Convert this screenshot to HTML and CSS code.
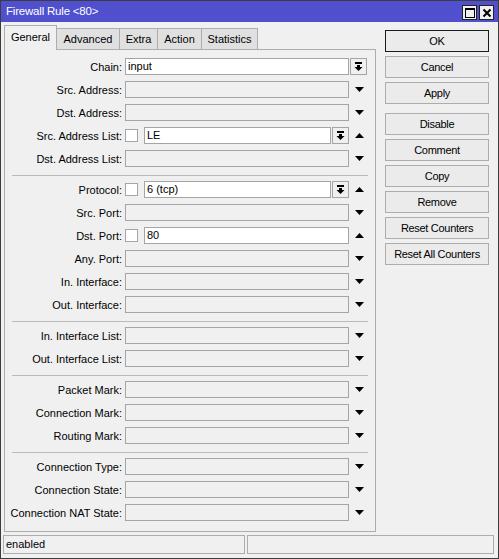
FILE: index.html
```html
<!DOCTYPE html>
<html>
<head>
<meta charset="utf-8">
<link rel="stylesheet" href="styles.css">
</head>
<body>
<div class="window">
  <div class="titlebar">
    <span class="title">Firewall Rule &lt;80&gt;</span>
    <div class="tb-btns">
      <span class="tb-btn"><svg width="12" height="12" viewBox="0 0 12 12"><rect x="1.5" y="1.5" width="9" height="9" fill="none" stroke="#000" stroke-width="1"/><rect x="1" y="1" width="10" height="2" fill="#000"/></svg></span>
      <span class="tb-btn"><svg width="12" height="12" viewBox="0 0 12 12"><path d="M2.5 2.5 L9.5 9.5 M9.5 2.5 L2.5 9.5" stroke="#000" stroke-width="2"/></svg></span>
    </div>
  </div>
  <div class="main">
    <div class="left">
      <div class="tabs">
        <div class="tab active w-general">General</div>
        <div class="tab w-advanced">Advanced</div>
        <div class="tab w-extra">Extra</div>
        <div class="tab w-action">Action</div>
        <div class="tab w-statistics">Statistics</div>
      </div>
      <div class="panel">
        <div class="row"><div class="lbl">Chain:</div><div class="field"><div class="box filled">input</div></div><div class="arrow"><div class="combo chain-combo"><svg width="9" height="10" viewBox="0 0 9 10"><rect x="1" y="0" width="7" height="2" fill="#000"/><rect x="3" y="3" width="3" height="2" fill="#000"/><polygon points="0.5,5 8.5,5 4.5,9" fill="#000"/></svg></div></div></div>
        <div class="row"><div class="lbl">Src. Address:</div><div class="field"><div class="box"></div></div><div class="arrow"><svg class="tri" width="9" height="5" viewBox="0 0 9 5"><polygon points="0,0 9,0 4.5,5" fill="#000"/></svg></div></div>
        <div class="row"><div class="lbl">Dst. Address:</div><div class="field"><div class="box"></div></div><div class="arrow"><svg class="tri" width="9" height="5" viewBox="0 0 9 5"><polygon points="0,0 9,0 4.5,5" fill="#000"/></svg></div></div>
        <div class="row"><div class="lbl">Src. Address List:</div><div class="field"><div class="check"></div><div class="box filled">LE</div><div class="combo"><svg width="9" height="10" viewBox="0 0 9 10"><rect x="1" y="0" width="7" height="2" fill="#000"/><rect x="3" y="3" width="3" height="2" fill="#000"/><polygon points="0.5,5 8.5,5 4.5,9" fill="#000"/></svg></div></div><div class="arrow"><svg class="tri" width="9" height="5" viewBox="0 0 9 5"><polygon points="0,5 9,5 4.5,0" fill="#000"/></svg></div></div>
        <div class="row"><div class="lbl">Dst. Address List:</div><div class="field"><div class="box"></div></div><div class="arrow"><svg class="tri" width="9" height="5" viewBox="0 0 9 5"><polygon points="0,0 9,0 4.5,5" fill="#000"/></svg></div></div>
        <div class="sep"></div>
        <div class="row"><div class="lbl">Protocol:</div><div class="field"><div class="check"></div><div class="box filled">6 (tcp)</div><div class="combo"><svg width="9" height="10" viewBox="0 0 9 10"><rect x="1" y="0" width="7" height="2" fill="#000"/><rect x="3" y="3" width="3" height="2" fill="#000"/><polygon points="0.5,5 8.5,5 4.5,9" fill="#000"/></svg></div></div><div class="arrow"><svg class="tri" width="9" height="5" viewBox="0 0 9 5"><polygon points="0,5 9,5 4.5,0" fill="#000"/></svg></div></div>
        <div class="row"><div class="lbl">Src. Port:</div><div class="field"><div class="box"></div></div><div class="arrow"><svg class="tri" width="9" height="5" viewBox="0 0 9 5"><polygon points="0,0 9,0 4.5,5" fill="#000"/></svg></div></div>
        <div class="row"><div class="lbl">Dst. Port:</div><div class="field"><div class="check"></div><div class="box filled">80</div></div><div class="arrow"><svg class="tri" width="9" height="5" viewBox="0 0 9 5"><polygon points="0,5 9,5 4.5,0" fill="#000"/></svg></div></div>
        <div class="row"><div class="lbl">Any. Port:</div><div class="field"><div class="box"></div></div><div class="arrow"><svg class="tri" width="9" height="5" viewBox="0 0 9 5"><polygon points="0,0 9,0 4.5,5" fill="#000"/></svg></div></div>
        <div class="row"><div class="lbl">In. Interface:</div><div class="field"><div class="box"></div></div><div class="arrow"><svg class="tri" width="9" height="5" viewBox="0 0 9 5"><polygon points="0,0 9,0 4.5,5" fill="#000"/></svg></div></div>
        <div class="row"><div class="lbl">Out. Interface:</div><div class="field"><div class="box"></div></div><div class="arrow"><svg class="tri" width="9" height="5" viewBox="0 0 9 5"><polygon points="0,0 9,0 4.5,5" fill="#000"/></svg></div></div>
        <div class="sep"></div>
        <div class="row"><div class="lbl">In. Interface List:</div><div class="field"><div class="box"></div></div><div class="arrow"><svg class="tri" width="9" height="5" viewBox="0 0 9 5"><polygon points="0,0 9,0 4.5,5" fill="#000"/></svg></div></div>
        <div class="row"><div class="lbl">Out. Interface List:</div><div class="field"><div class="box"></div></div><div class="arrow"><svg class="tri" width="9" height="5" viewBox="0 0 9 5"><polygon points="0,0 9,0 4.5,5" fill="#000"/></svg></div></div>
        <div class="sep"></div>
        <div class="row"><div class="lbl">Packet Mark:</div><div class="field"><div class="box"></div></div><div class="arrow"><svg class="tri" width="9" height="5" viewBox="0 0 9 5"><polygon points="0,0 9,0 4.5,5" fill="#000"/></svg></div></div>
        <div class="row"><div class="lbl">Connection Mark:</div><div class="field"><div class="box"></div></div><div class="arrow"><svg class="tri" width="9" height="5" viewBox="0 0 9 5"><polygon points="0,0 9,0 4.5,5" fill="#000"/></svg></div></div>
        <div class="row"><div class="lbl">Routing Mark:</div><div class="field"><div class="box"></div></div><div class="arrow"><svg class="tri" width="9" height="5" viewBox="0 0 9 5"><polygon points="0,0 9,0 4.5,5" fill="#000"/></svg></div></div>
        <div class="sep"></div>
        <div class="row"><div class="lbl">Connection Type:</div><div class="field"><div class="box"></div></div><div class="arrow"><svg class="tri" width="9" height="5" viewBox="0 0 9 5"><polygon points="0,0 9,0 4.5,5" fill="#000"/></svg></div></div>
        <div class="row"><div class="lbl">Connection State:</div><div class="field"><div class="box"></div></div><div class="arrow"><svg class="tri" width="9" height="5" viewBox="0 0 9 5"><polygon points="0,0 9,0 4.5,5" fill="#000"/></svg></div></div>
        <div class="row"><div class="lbl">Connection NAT State:</div><div class="field"><div class="box"></div></div><div class="arrow"><svg class="tri" width="9" height="5" viewBox="0 0 9 5"><polygon points="0,0 9,0 4.5,5" fill="#000"/></svg></div></div>
      </div>
    </div>
    <div class="buttons">
      <div class="btn default">OK</div>
      <div class="btn">Cancel</div>
      <div class="btn">Apply</div>
      <div class="btn gap">Disable</div>
      <div class="btn">Comment</div>
      <div class="btn">Copy</div>
      <div class="btn">Remove</div>
      <div class="btn">Reset Counters</div>
      <div class="btn">Reset All Counters</div>
    </div>
  </div>
  <div class="statusbar">
    <div class="status-cell first">enabled</div>
    <div class="status-cell second"></div>
  </div>
</div>
</body>
</html>
```

FILE: styles.css
```css
* { box-sizing: border-box; }
html, body { margin: 0; padding: 0; }
body {
  font-family: "Liberation Sans", Arial, sans-serif;
  font-size: 11px;
  color: #000;
  background: #f0f0f0;
}
.window {
  width: 499px;
  height: 559px;
  border: 1px solid #3c3c3c;
  background: #f0f0f0;
  display: flex;
  flex-direction: column;
}
.titlebar {
  height: 21px;
  background: #5050cf;
  display: flex;
  align-items: flex-start;
  justify-content: space-between;
  flex-shrink: 0;
}
.title {
  color: #fff;
  font-size: 11.5px;
  padding-left: 5px;
  line-height: 21px;
  letter-spacing: -0.2px;
}
.tb-btns {
  display: flex;
  gap: 2px;
  padding-top: 4px;
  margin-right: 4px;
}
.tb-btn {
  width: 15px;
  height: 15px;
  background: #f0f0f0;
  border: 1px solid #222;
  display: flex;
  align-items: center;
  justify-content: center;
}
.tb-btn svg { display: block; }

.main {
  display: flex;
  align-items: flex-start;
  flex-shrink: 0;
}
.left {
  padding-left: 3px;
  padding-top: 3px;
}
.tabs {
  display: flex;
  align-items: flex-end;
  height: 24px;
}
.tab {
  height: 21px;
  border: 1px solid #adadad;
  border-bottom: none;
  border-left: none;
  background: #e0e0e0;
  display: flex;
  align-items: center;
  justify-content: center;
}
.tab.active {
  height: 25px;
  background: #f0f0f0;
  border-left: 1px solid #adadad;
  margin-bottom: -1px;
  position: relative;
  z-index: 1;
  padding-bottom: 2px;
}
.w-general { width: 53px; }
.w-advanced { width: 63px; }
.w-extra { width: 38px; }
.w-action { width: 44px; }
.w-statistics { width: 56px; }

.panel {
  width: 372px;
  border: 1px solid #adadad;
  padding: 5px 0 7px 0;
  display: flex;
  flex-direction: column;
}
.row {
  height: 23px;
  display: flex;
  align-items: center;
}
.lbl {
  width: 117px;
  text-align: right;
  white-space: nowrap;
}
.field {
  width: 224px;
  margin-left: 3px;
  display: flex;
  align-items: center;
  height: 17px;
}
.box {
  flex: 1;
  height: 17px;
  border: 1px solid #a5a5a5;
  background: #f0f0f0;
  padding-left: 2px;
  line-height: 15px;
  white-space: nowrap;
}
.box.filled { background: #fff; }
.check {
  width: 13px;
  height: 13px;
  border: 1px solid #a5a5a5;
  background: #fff;
  margin-right: 6px;
  flex-shrink: 0;
}
.combo {
  width: 17px;
  height: 17px;
  margin-left: 1px;
  border: 1px solid #a5a5a5;
  background: #f0f0f0;
  display: flex;
  align-items: center;
  justify-content: center;
  flex-shrink: 0;
}
.combo svg { display: block; }
.arrow {
  width: 19px;
  height: 17px;
  display: flex;
  align-items: center;
}
.arrow .tri {
  display: block;
  margin-left: 6px;
}
.arrow .chain-combo { margin-left: 1px; }
.sep {
  height: 1px;
  margin: 5px 7px 2px 7px;
  background: #b9b9b9;
}

.buttons {
  margin-left: 9px;
  margin-top: 8px;
  width: 104px;
  display: flex;
  flex-direction: column;
  gap: 4px;
}
.btn {
  height: 22px;
  border: 1px solid #adadad;
  background: #ebebeb;
  display: flex;
  align-items: center;
  justify-content: center;
  white-space: nowrap;
  letter-spacing: -0.3px;
}
.btn.default { border-color: #1a1a1a; }
.btn.gap { margin-top: 5px; }

.statusbar {
  margin-top: 3px;
  height: 19px;
  display: flex;
  gap: 2px;
  padding-left: 2px;
  padding-right: 4px;
  flex-shrink: 0;
}
.status-cell {
  height: 19px;
  border: 1px solid #adadad;
  line-height: 17px;
  padding-left: 2px;
}
.status-cell.first { width: 242px; }
.status-cell.second { flex: 1; }
```
